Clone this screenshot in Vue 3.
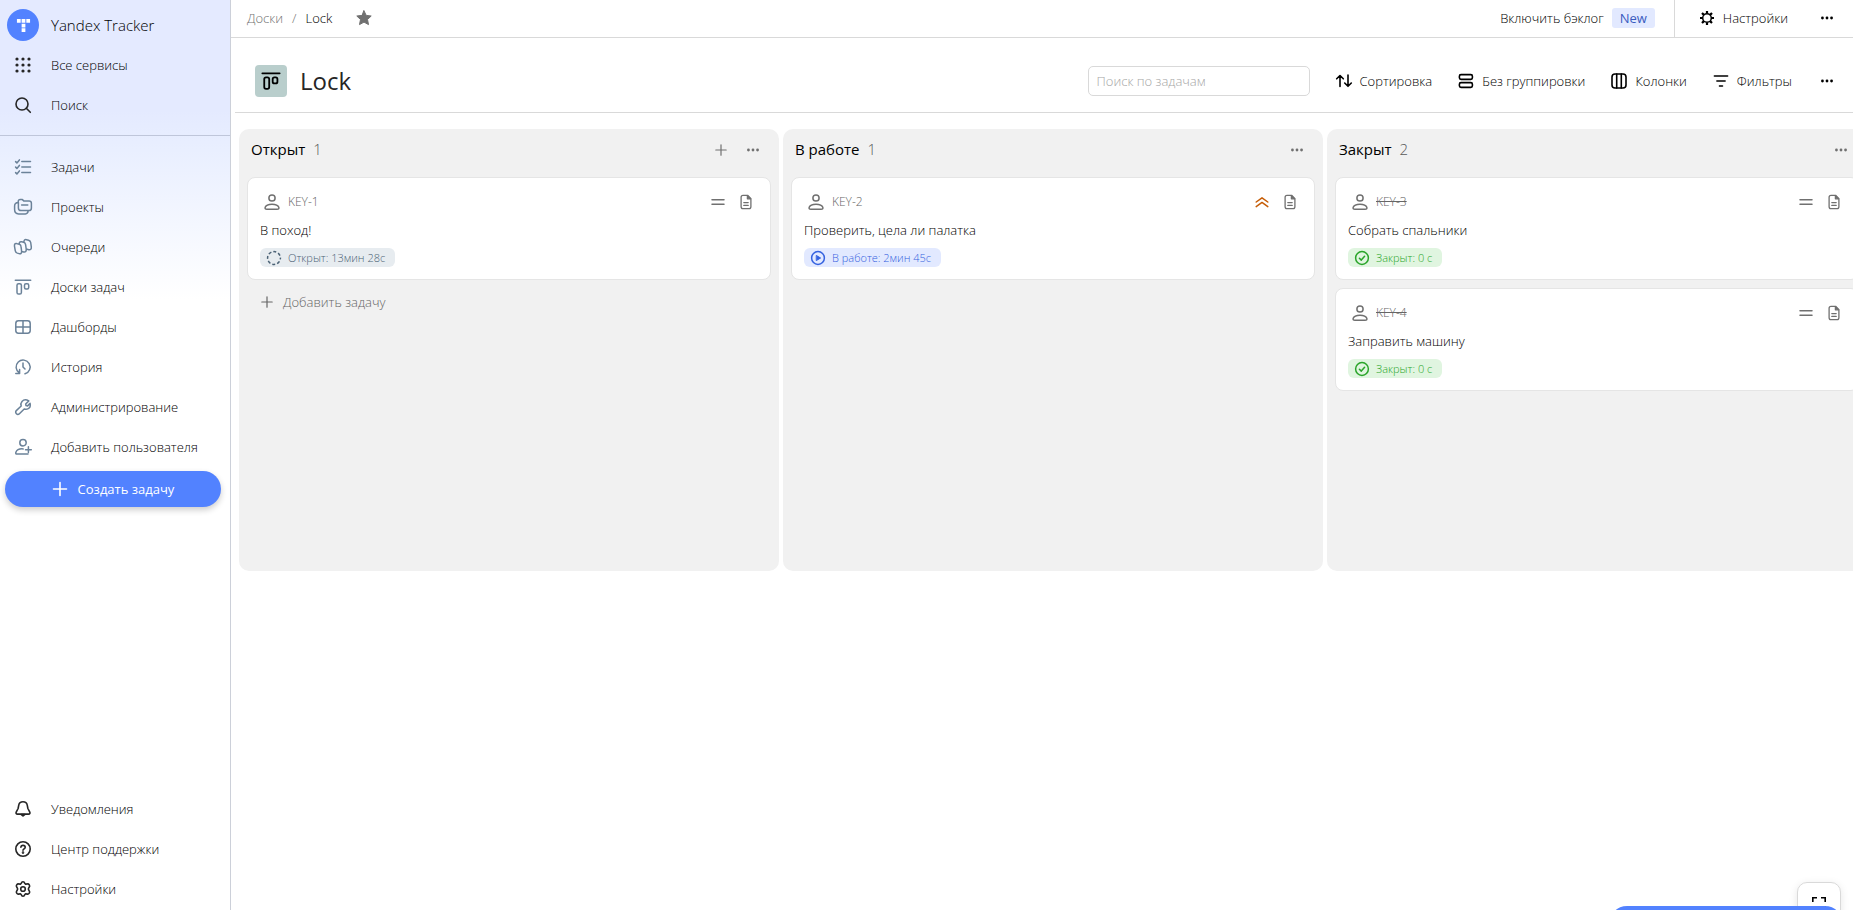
<script setup>
import { h, ref } from 'vue'

const glyphs = {
  grid: '<g fill="currentColor">' + [2, 8, 14].map(y => [2, 8, 14].map(x => `<circle cx="${x}" cy="${y}" r="1.6"/>`).join('')).join('') + '</g>',
  search: '<circle cx="7" cy="7" r="6"/><path d="M11.3 11.3 15.3 15.3"/>',
  tasks: '<path d="M6.8 2.5H15.5M6.8 8H15.5M6.8 13.5H15.5M.6 2.6 1.9 3.9 4.4.9M.6 8.1 1.9 9.4 4.4 6.4M.6 13.6 1.9 14.9 4.4 11.9"/>',
  projects: '<path d="M3.2 3.4V2.6C3.2 1.3 4 .6 5.2.6H7.4L9 2.1H14C15.5 2.1 16.4 3 16.4 4.3V9C16.4 10.7 15.4 11.6 13.9 11.6H6.2C4.4 11.6 3.4 10.6 3.4 9V3.3M3.3 3.5C.8 3.6-.4 4.8-.4 6.9V10.6C-.4 13.6.8 14.9 3.6 14.9H10.4C12 14.9 13 14 13.2 11.8M6.6 5.9H12.8"/>',
  queues: '<path d="M1.6 4.6 4.2 5.3C5.4 5.6 5.9 6.3 6 7.4L6.6 12.2C6.8 14.2 5.8 15.1 4.1 14.6L2.3 14.1C1.1 13.7.5 13.1.3 11.9L-.5 7.3C-.8 5.3 0 4.2 1.6 4.6ZM4.3 5.2C4.2 3.3 5 2.4 6.6 2.8L8.6 3.3C9.9 3.7 10.4 4.3 10.6 5.6L11.2 10C11.5 12.2 10.5 13.3 8.7 12.9L6.8 12.4M8.9 3.3C8.8 1.2 9.8.3 11.5.7L13.6 1.2C14.9 1.6 15.5 2.3 15.7 3.5L16.3 7.8C16.6 10 15.5 11 13.8 10.7L11.4 10.1"/>',
  board: '<path d="M.3 1.2H15.7"/><rect x="2" y="4.7" width="4.4" height="10.3" rx="1.6"/><rect x="9.5" y="4.7" width="4.2" height="5.4" rx="1.5"/>',
  dashboard: '<rect x=".8" y="1.8" width="14.4" height="12.4" rx="2.6"/><path d="M8 2V14M1 8H15"/>',
  history: '<path d="M4.4 14A7 7 0 1 1 10 14.8M4.6 10.4V14.4H.8M8 4V8L10 10"/>',
  wrench: '<path d="M13.8 1.9 10.7 5 11 6.6 12.6 6.9 15.1 4.4C15.7 6.8 14.9 9 12.8 9.9 11.4 10.5 10.2 10.2 9.2 10L4.4 14.7C3.4 15.7 2.2 15.5 1.4 14.7.5 13.8.4 12.5 1.3 11.6L6.2 7C5.6 5.3 5.9 3.7 7 2.4 8.7.5 11 .2 13.8 1.9Z"/>',
  userplus: '<circle cx="8" cy="3.7" r="3.2"/><path d="M13 15.1H2C.8 15.1.5 14.3.9 13.2 1.8 10.9 4.7 9.6 8.2 9.9M13.4 7.8V13.6M10.5 10.7H16.3"/>',
  bell: '<path d="M8 .8C10.5.8 11.9 2.2 12.3 4.3L12.9 7.5 14.8 11.2C15.3 12.3 14.8 13.1 13.5 13.1H2.5C1.2 13.1.7 12.3 1.2 11.2L3.1 7.5 3.7 4.3C4.1 2.2 5.5.8 8 .8Z"/><path fill="currentColor" d="M6.3 13.6H9.7L8 15Z"/>',
  help: '<circle cx="8" cy="8" r="7.2"/><path d="M5.9 6.3C6 5 6.8 4.4 8 4.4S10.2 5.1 10.2 6.3C10.2 7.8 8 7.9 8 9.3"/><circle cx="8" cy="11.6" r=".5"/>',
  settings: '<path d="M6.3 2.2C6.6 1 7 .7 8 .7S9.4 1 9.7 2.2L10.6 3.2 12.2 2.9C13.2 2.6 13.7 2.9 14.3 3.9S15 5.2 14.3 6L13.5 7.3V8.7L14.3 10C15 10.8 14.9 11.2 14.3 12.1S13.2 13.4 12.2 13.1L10.6 12.8 9.7 13.8C9.4 15 9 15.3 8 15.3S6.6 15 6.3 13.8L5.4 12.8 3.8 13.1C2.8 13.4 2.3 13.1 1.7 12.1S1 10.8 1.7 10L2.5 8.7V7.3L1.7 6C1 5.2 1.1 4.8 1.7 3.9S2.8 2.6 3.8 2.9L5.4 3.2Z"/><circle cx="8" cy="8" r="2.3"/>',
  star: '<path fill="currentColor" stroke-width="1" stroke-linejoin="round" d="M8 .8 10.2 5.4 15.2 6 11.5 9.5 12.5 14.6 8 12.1 3.5 14.6 4.5 9.5.8 6 5.8 5.4Z"/>',
  gear: '<circle cx="8" cy="8" r="4.3"/><path stroke-width="2.2" stroke-linecap="butt" d="M8 1V3.6M8 12.4V15M1 8H3.6M12.4 8H15M3 3 4.9 4.9M11.1 11.1 13 13M13 3 11.1 4.9M3 13 4.9 11.1"/>',
  dots: '<g fill="currentColor" stroke="none"><circle cx="2.8" cy="8" r="1.6"/><circle cx="8" cy="8" r="1.6"/><circle cx="13.2" cy="8" r="1.6"/></g>',
  sort: '<path d="M4 13.5V2.8M.7 5.8 4 2.5 7.3 5.8M12 2V13M8.7 10 12 13.3 15.3 10"/>',
  group: '<rect x="1.4" y="1.6" width="13" height="4.8" rx="1.6"/><rect x="1.4" y="9.6" width="13" height="4.8" rx="1.6"/>',
  columns: '<rect x="1" y="1" width="14" height="14" rx="3"/><path d="M5.7 1V15M10.3 1V15"/>',
  filter: '<path d="M1.4 3H14.6M3.9 8H12.1M6.5 13H9.5"/>',
  plus: '<path d="M8 2.8V13.2M2.8 8H13.2"/>',
  bigplus: '<path d="M8 1.5V14.5M1.5 8H14.5"/>',
  user: '<circle cx="8" cy="4" r="3.1"/><path d="M3 15.2H13C14.7 15.2 15.2 14.4 14.8 13.3 14.1 11.3 11.4 10.2 8 10.2S1.9 11.3 1.2 13.3C.8 14.4 1.3 15.2 3 15.2Z"/>',
  equal: '<path d="M2 5.8H14M2 10.3H14"/>',
  up: '<path d="M2.2 8 8 3.8 13.8 8M2.2 12.6 8 8.4 13.8 12.6"/>',
  doc: '<path d="M9.6 1.3H5C3.8 1.3 3.1 2 3.1 3.2V12.8C3.1 14 3.8 14.7 5 14.7H11C12.2 14.7 12.9 14 12.9 12.8V4.6ZM5.8 8.6H10.2M5.8 11.4H10.2"/><path fill="currentColor" d="M9.4 1.6V4.8H12.6Z"/>',
  open: '<circle cx="8" cy="8" r="6.4" stroke-linecap="butt" stroke-dasharray="3 2.03" stroke-dashoffset="1.5"/>',
  play: '<circle cx="8" cy="8" r="6.4"/><path fill="currentColor" stroke-width="1" d="M6.6 5.6 10.6 8 6.6 10.4Z"/>',
  check: '<circle cx="8" cy="8" r="6.4"/><path d="M5.4 8.2 7.3 10.1 10.6 6.2"/>',
  expand: '<path stroke-linecap="butt" stroke-linejoin="miter" stroke-width="1.6" d="M1.8 6V1.8H6M10 1.8H14.2V6M14.2 10V14.2H10M6 14.2H1.8V10"/>',
  logo: '<g fill="currentColor" stroke="none"><path d="M1 1H5V5H1ZM6 1H10V5H6ZM11 1H15V5H11ZM6 6H10V10H6ZM6 11H10V15H6Z"/></g>'
}

const Icon = (props) => h('svg', {
  class: 'icon',
  viewBox: '0 0 16 16',
  width: props.size || 16,
  height: props.size || 16,
  fill: 'none',
  stroke: 'currentColor',
  'stroke-width': props.weight || 1.5,
  'stroke-linecap': 'round',
  'stroke-linejoin': 'round',
  overflow: 'visible',
  'aria-hidden': 'true',
  innerHTML: glyphs[props.name]
})
Icon.props = ['name', 'size', 'weight']

const nav = [
  ['tasks', 'Задачи'],
  ['projects', 'Проекты'],
  ['queues', 'Очереди'],
  ['board', 'Доски задач'],
  ['dashboard', 'Дашборды'],
  ['history', 'История'],
  ['wrench', 'Администрирование'],
  ['userplus', 'Добавить пользователя']
]
const service = [
  ['bell', 'Уведомления'],
  ['help', 'Центр поддержки'],
  ['settings', 'Настройки']
]
const tools = [
  ['sort', 'Сортировка'],
  ['group', 'Без группировки'],
  ['columns', 'Колонки'],
  ['filter', 'Фильтры']
]
const columns = [
  { title: 'Открыт', kind: 'open', canAdd: true, cards: [
    { key: 'KEY-1', title: 'В поход!', tag: 'Открыт: 13мин 28с', priority: 'equal' }
  ] },
  { title: 'В работе', kind: 'play', cards: [
    { key: 'KEY-2', title: 'Проверить, цела ли палатка', tag: 'В работе: 2мин 45с', priority: 'up' }
  ] },
  { title: 'Закрыт', kind: 'check', cards: [
    { key: 'KEY-3', title: 'Собрать спальники', tag: 'Закрыт: 0 с', priority: 'equal' },
    { key: 'KEY-4', title: 'Заправить машину', tag: 'Закрыт: 0 с', priority: 'equal' }
  ] }
]
const query = ref('')
</script>

<template>
  <div class="app">
    <aside class="sidebar">
      <div class="side-top">
        <a class="row brand" href="#"><span class="logo"><Icon name="logo" :size="15" /></span>Yandex Tracker</a>
        <button class="row" type="button"><span class="slot dark"><Icon name="grid" weight="0" /></span>Все сервисы</button>
        <button class="row" type="button"><span class="slot dark"><Icon name="search" weight="1.6" /></span>Поиск</button>
      </div>
      <nav class="side-nav">
        <a v-for="[icon, label] in nav" :key="icon" class="row" href="#"><span class="slot"><Icon :name="icon" /></span>{{ label }}</a>
      </nav>
      <button class="create" type="button"><Icon name="bigplus" weight="1.6" />Создать задачу</button>
      <nav class="side-bottom">
        <a v-for="[icon, label] in service" :key="icon" class="row" href="#"><span class="slot dark"><Icon :name="icon" weight="1.6" /></span>{{ label }}</a>
      </nav>
    </aside>

    <main class="main">
      <header class="topbar">
        <a class="crumb" href="#">Доски</a><span class="slash">/</span><span>Lock</span>
        <button class="star" type="button" aria-label="В избранное"><Icon name="star" /></button>
        <button class="backlog" type="button">Включить бэклог<span class="new">New</span></button>
        <div class="top-actions">
          <button class="tool" type="button"><Icon name="gear" />Настройки</button>
          <button class="more" type="button" aria-label="Ещё"><Icon name="dots" size="14" /></button>
        </div>
      </header>

      <div class="titlebar">
        <span class="board-icon"><Icon name="board" size="18" weight="1.6" /></span>
        <h1>Lock</h1>
        <input v-model="query" class="search" type="text" placeholder="Поиск по задачам" aria-label="Поиск по задачам">
        <div class="tools">
          <button v-for="[icon, label] in tools" :key="icon" class="tool" type="button"><Icon :name="icon" weight="1.6" />{{ label }}</button>
        </div>
        <button class="more" type="button" aria-label="Ещё"><Icon name="dots" size="14" /></button>
      </div>

      <div class="board">
        <section v-for="col in columns" :key="col.title" class="column">
          <div class="column-head">
            <h2>{{ col.title }}</h2><span class="count">{{ col.cards.length }}</span>
            <div class="column-actions">
              <button v-if="col.canAdd" type="button" aria-label="Добавить"><Icon name="plus" weight="1.2" /></button>
              <button type="button" aria-label="Ещё"><Icon name="dots" size="14" /></button>
            </div>
          </div>
          <article v-for="card in col.cards" :key="card.key" class="card">
            <div class="card-top">
              <Icon name="user" />
              <a class="key" :class="{ done: col.kind === 'check' }" href="#">{{ card.key }}</a>
              <Icon :name="card.priority" class="priority" :class="card.priority" />
              <Icon name="doc" weight="1.3" />
            </div>
            <p>{{ card.title }}</p>
            <span class="tag" :class="col.kind"><Icon :name="col.kind" weight="1.5" />{{ card.tag }}</span>
          </article>
          <button v-if="col.canAdd" class="add" type="button"><Icon name="plus" weight="1.2" />Добавить задачу</button>
        </section>
      </div>
    </main>

    <button class="fullscreen" type="button" aria-label="На весь экран"><Icon name="expand" /></button>
    <button class="support" type="button" aria-label="Поддержка"></button>
  </div>
</template>

<style>
body {
  background: #fff;
  overflow: hidden;
}
</style>

<style scoped>
.app {
  display: flex;
  height: 100vh;
  overflow: hidden;
  color: #000;
  font-family: "Open Sans", "Noto Sans", sans-serif;
  font-size: 13px;
  font-weight: 300;
  line-height: 20px;
}
* { box-sizing: border-box; }
a { color: inherit; text-decoration: none; }
button {
  padding: 0;
  border: 0;
  background: none;
  color: inherit;
  font: inherit;
  cursor: pointer;
}
h1, h2, p { margin: 0; }
.icon { display: block; flex: none; }

.sidebar {
  display: flex;
  flex-direction: column;
  flex: none;
  width: 231px;
  border-right: 1px solid #ccd0d9;
  background: linear-gradient(#e4eaff 0, #e4eaff 110px, #e9efff 150px, #fff 300px);
}
.side-top {
  padding: 6px 0 9px;
  border-bottom: 1px solid #bfc6da;
}
.side-nav { padding-top: 12px; }
.side-bottom { margin-top: auto; }
.row {
  display: flex;
  align-items: center;
  width: 100%;
  height: 40px;
  padding-left: 7px;
  padding-bottom: 2px;
  text-align: left;
}
.slot {
  display: flex;
  justify-content: center;
  width: 32px;
  margin-right: 12px;
  color: #6b8299;
}
.dark { color: #262626; }
.brand { font-size: 15px; }
.logo {
  display: flex;
  align-items: center;
  justify-content: center;
  width: 32px;
  height: 32px;
  margin-right: 12px;
  border-radius: 50%;
  background: #5282ff;
  color: #fff;
}
.create {
  display: flex;
  align-items: center;
  justify-content: center;
  gap: 10px;
  height: 36px;
  margin: 3px 9px 0 5px;
  border-radius: 18px;
  background: #5282ff;
  box-shadow: 0 3px 6px rgba(0, 0, 0, .2);
  color: #fff;
  font-weight: 400;
}

.main {
  display: flex;
  flex-direction: column;
  flex: 1;
  min-width: 0;
}
.topbar {
  display: flex;
  align-items: center;
  height: 38px;
  padding-left: 16px;
  border-bottom: 1px solid #d9d9d9;
}
.topbar > *, .top-actions > * { padding-bottom: 2px; }
.crumb, .slash { color: #737373; }
.slash { margin: 0 9px; }
.star { margin-left: 24px; color: #707070; }
.backlog {
  display: flex;
  align-items: center;
  gap: 8px;
  margin-left: auto;
}
.new {
  padding: 0 8px;
  border-radius: 3px;
  background: #e2e9ff;
  color: #3a5cc0;
  font-weight: 400;
}
.topbar .top-actions {
  display: flex;
  align-items: center;
  align-self: stretch;
  margin-left: 19px;
  padding-bottom: 0;
  padding-left: 24px;
  border-left: 1px solid #d9d9d9;
}
.tool {
  display: flex;
  align-items: center;
  gap: 8px;
}
.more { margin: 0 19px 0 28px; }
.topbar .more { margin-left: 32px; }
.titlebar {
  display: flex;
  align-items: center;
  height: 75px;
  margin-left: 4px;
  padding: 23px 0 11px 20px;
  border-bottom: 1px solid #d9d9d9;
}
.board-icon {
  display: flex;
  align-items: center;
  justify-content: center;
  width: 32px;
  height: 32px;
  margin-right: 13px;
  border-radius: 4px;
  background: #b9cecc;
}
h1 {
  font-size: 24px;
  line-height: 32px;
  font-weight: 500;
  color: #262626;
}
.search {
  width: 222px;
  height: 30px;
  margin-left: auto;
  padding: 0 8px;
  border: 1px solid #d9d9d9;
  border-radius: 5px;
  outline: 0;
  color: inherit;
  font: inherit;
}
.search::placeholder { color: #a6a6a6; opacity: 1; }
.tools {
  display: flex;
  gap: 26px;
  margin-left: 26px;
}

.board {
  display: flex;
  gap: 4px;
  padding: 16px 0 0 8px;
}
.column {
  flex: none;
  width: 540px;
  min-height: 442px;
  padding: 0 8px;
  border-radius: 10px;
  background: #f1f1f1;
}
.column-head {
  display: flex;
  align-items: center;
  height: 48px;
  padding: 0 11px 6px 4px;
}
h2, .count { padding-bottom: 2px; }
h2 {
  font-size: 15px;
  line-height: 20px;
  font-weight: 500;
}
.count {
  margin-left: 8px;
  color: #595959;
  font-size: 15px;
}
.column-actions {
  display: flex;
  align-items: center;
  gap: 17px;
  margin-left: auto;
  color: #707070;
}
.card {
  margin-bottom: 8px;
  padding: 14px 12px 12px;
  border: 1px solid #e5e5e5;
  border-radius: 8px;
  background: #fff;
}
.card-top {
  display: flex;
  align-items: center;
  height: 20px;
  padding-left: 4px;
  padding-right: 4px;
  color: #707070;
}
.key {
  margin-left: 8px;
  color: #666;
  font-size: 12px;
}
.done { text-decoration: line-through; }
.priority { margin: 0 12px 0 auto; }
.up { color: #c65d07; }
.card p { margin: 8px 0; }
.tag {
  display: flex;
  align-items: center;
  gap: 6px;
  width: fit-content;
  height: 19px;
  padding: 0 10px 0 6px;
  border-radius: 6px;
  font-size: 11px;
  font-weight: 350;
  line-height: 18px;
}
.tag.open { background: #e7ecf0; color: #4b6275; }
.tag.play { background: #e2e9ff; color: #3562e0; }
.tag.check { background: #e0f5e0; color: #2aa52a; }
.add {
  display: flex;
  align-items: center;
  gap: 8px;
  padding: 4px 12px;
  color: #666;
}

.fullscreen {
  position: fixed;
  right: 12px;
  bottom: -16px;
  display: flex;
  align-items: center;
  justify-content: center;
  width: 44px;
  height: 44px;
  border: 1px solid #d9d9d9;
  border-radius: 10px;
  background: #fff;
  box-shadow: 0 2px 8px rgba(0, 0, 0, .1);
}
.support {
  position: fixed;
  right: 10px;
  bottom: -32px;
  width: 234px;
  height: 36px;
  border-radius: 18px;
  background: #5282ff;
}
</style>
